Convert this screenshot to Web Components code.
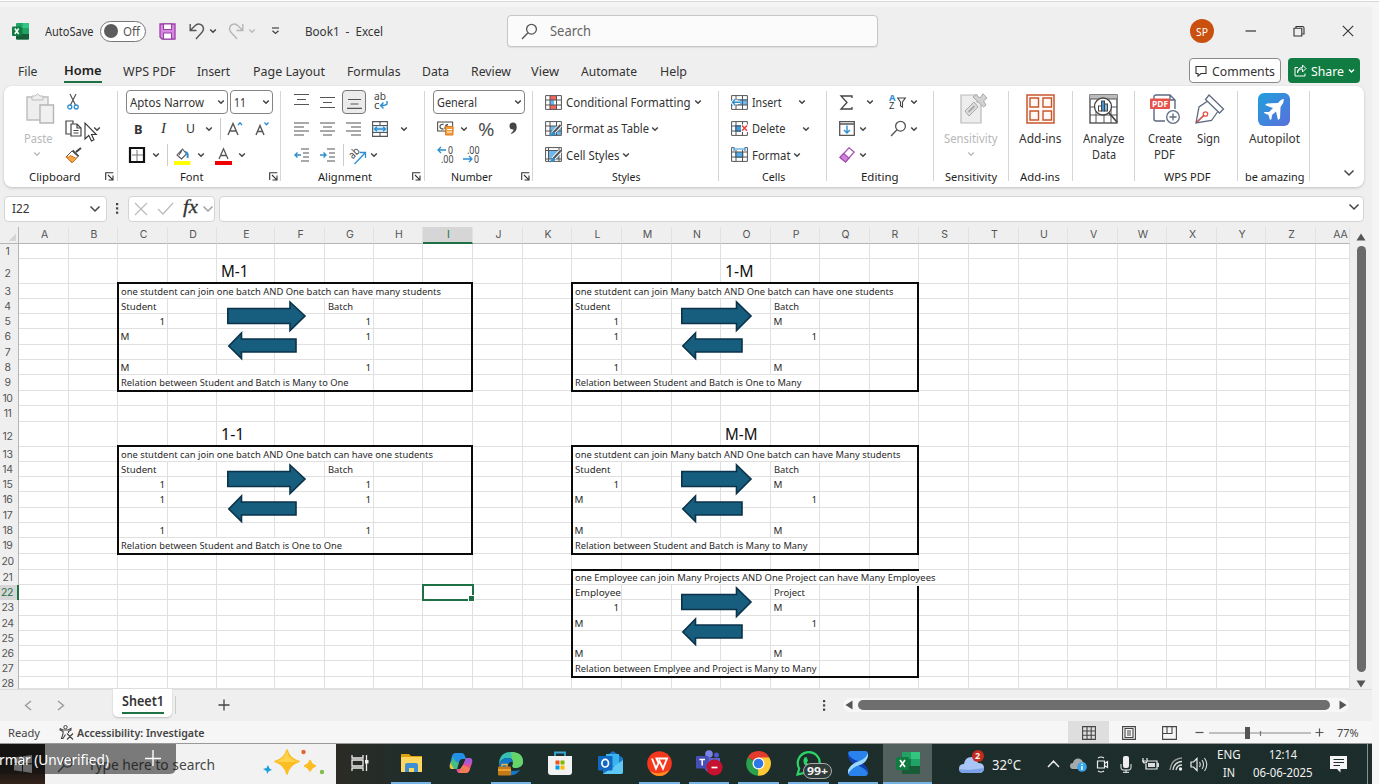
<!DOCTYPE html>
<html lang="en">
<head>
<meta charset="utf-8">
<title>Book1 - Excel</title>
<style>
html,body{margin:0;height:100%;overflow:hidden}
body{font-family:"Noto Sans","Open Sans",sans-serif;font-size:12.500px;color:#333;background:#f5f5f5}
</style>
</head>
<body>
<excel-app></excel-app>
<script>
const S = (d, c = '#555', w = 1.2, f = 'none') => `<path d="${d}" stroke="${c}" stroke-width="${w}" fill="${f}"/>`;
const B = '#2d8fd0';
const gridBase = (extra) => `<rect x=".6" y=".6" width="15.6" height="13.8" fill="#fff"/>` + extra + S('M.6.6H16.4V14.4H.6ZM.6 5H16.4M.6 10H16.4M5 .6V14.4M11.5 .6V14.4', '#555', 1);
const ICONS = {
  chev: [8, 6, S('M1.2 1.5L4 4.3L6.8 1.5', '#444', 1.5)],
  chevL: [8, 6, S('M1.2 1.5L4 4.3L6.8 1.5', '#bbb', 1.4)],
  bigchev: [12, 8, S('M1.5 1.5L6 6L10.5 1.5', '#444', 1.5)],
  launch: [9, 9, S('M.7 8V.7H8.3M3 3L7.6 7.6M8 3.5V8H3.5', '#333', 1.1)],
  excel: [17, 17, `<rect x="4" width="13" height="16.5" rx="1" fill="#21a366"/><path d="M10.500 0H16a1 1 0 0 1 1 1V5H10.500Z" fill="#33c481"/><path d="M4 5H10.500V11H4Z" fill="#107c41"/><path d="M4 11H17V15.500a1 1 0 0 1-1 1H5a1 1 0 0 1-1-1Z" fill="#185c37"/><rect y="3.500" width="9.500" height="9.500" rx="1" fill="#107c41"/>` + S('M2.800 5.500L6.700 11M6.700 5.500L2.800 11', '#fff', 1.5)],
  save: [17, 17, `<path d="M1 1H16V16H3L1 14Z" fill="#d78be0" stroke="#9a3fa8" stroke-width="1.300"/><path d="M4.500 1H12.500V6.500H4.500ZM4.500 16V10H12.500V16Z" fill="#fff" stroke="#9a3fa8" stroke-width="1.100"/>`],
  undo: [16, 17, S('M1.200 1V7.500H7.500M1.500 7.300L6 2.800C9-.5 14.500 1.200 14.500 6C14.500 9 12 10 7 16', '#555', 1.4)],
  redo: [16, 17, S('M14.800 1V7.500H8.500M14.500 7.300L10 2.800C7-.5 1.500 1.200 1.500 6C1.500 9 4 10 9 16', '#b5b5b5', 1.4)],
  custom: [9, 8, S('M1 1H8', '#444', 1.2) + S('M1.500 3.800L4.500 6.500L7.500 3.800', '#444', 1.3)],
  search: [17, 17, `<circle cx="10.500" cy="6.200" r="4.900" fill="none" stroke="#555" stroke-width="1.300"/>` + S('M7 9.800L1 16', '#555', 1.4)],
  min: [12, 12, S('M.5 6H11', '#333')], restore: [12, 12, S('M3 3V1.500H9.500a1.500 1.500 0 0 1 1.500 1.500V9H9.500M1 3.300H8.800V11H1Z', '#333', 1.1)],
  close: [12, 12, S('M.8 .8L11.200 11.200M11.200 .8L.8 11.200', '#333', 1.1)],
  comment: [12, 12, S('M1 1.500H11V8.500H6L3 11V8.500H1Z', '#333', 1.1)],
  share: [13, 13, S('M4 3.500H1V12H11V9.500M3.500 9C4 6 6 5 8.500 5V8L12 4.500L8.500 1V3.500C5 3.500 3.300 6 3.500 9Z', '#fff', 1)],
  paste: [29, 31, `<path d="M1 4H22V27H1Z" fill="#eee" stroke="#bdbdbd" stroke-width="1.400"/><path d="M6 7V3H9L11.500 .8L14 3H17V7Z" fill="#eee" stroke="#bdbdbd"/><path d="M14 12H27.500V30H14Z" fill="#f0f0f0" stroke="#b5b5b5" stroke-width="1.400"/>`],
  cut: [12, 16, S('M3 0L8.500 11M9 0L3.500 11') + `<circle cx="2.800" cy="13" r="2" fill="none" stroke="${B}" stroke-width="1.300"/><circle cx="9.200" cy="13" r="2" fill="none" stroke="${B}" stroke-width="1.300"/>`],
  copy: [17, 17, S('M6 14H1V1H8V4M6 4H12L16 8V16H6ZM12 4V8H16M8.500 10.500H13.500M8.500 13H13.500', '#444', 1.2)],
  brush: [17, 16, S('M16 1L11 5M7.500 3.500L13.500 9.500', '#444', 2) + `<path d="M7 4L13 9.500L7 15.500L1 10Z" fill="#fff" stroke="#555"/><path d="M1 9.500Q4 11 5.500 8.500L11.500 11.500L7.500 15.500Q4 14 1 9.500Z" fill="#f2a64a" stroke="#d9781a"/>`],
  border: [16, 16, S('M1 1H15V15H1Z', '#111', 2.2) + S('M8 3V14M3 8H14', '#777', 1)],
  bucket: [17, 18, `<rect y="13" width="16.500" height="4" fill="#ffff00"/>` + S('M3 7L8.500 1L12.500 6L7.500 11ZM5 7L8 2.500', '#555', 1.1) + S('M11 4C14 4 14 7 13.500 10', B, 2)],
  fcolor: [17, 18, `<rect y="13" width="17" height="4" fill="#f00000"/>` + S('M4 11L8.500 .8L13 11M5.500 7.500H11.500', '#555', 1.3)],
  aup: [16, 15, S('M1 14L6 2.500L11 14M2.800 10H9.200', '#555', 1.4) + S('M11 4L13 1.800L15 4', B, 1.3)],
  adn: [14, 15, S('M1 14L5 4.500L9 14M2.500 10.500H7.500', '#555', 1.4) + S('M9.500 1.500L11.500 3.700L13.500 1.500', B, 1.3)],
  top: [15, 14, S('M0 1.500H15M3 6.500H12M0 11.500H15')],
  mid: [15, 14, S('M0 2.500H15M3 7.500H12M0 12.500H15')],
  bot: [15, 14, S('M1 4.500H14M3.500 9H11.500M0 13.300H15')],
  left: [15, 14, S('M0 1H15M0 5H10M0 9H15M0 13H10')], center: [15, 14, S('M0 1H15M3 5H12M0 9H15M3 13H12')], right: [15, 14, S('M0 1H15M5 5H15M0 9H15M5 13H15')],
  wrap: [16, 17, S('M14 9V12Q13 13.500 8 13.500M10.500 10.500L7.500 13.500L10.500 16.500', B, 1.4)],
  merge: [16, 16, `<rect x="1" y="4.500" width="14" height="7" fill="#cfe6f7"/>` + S('M.6.6H15.400V15.400H.6ZM.6 4.500H15.400M.6 11.500H15.400M8 .6V4.500M8 11.500V15', '#555', 1.1) + S('M2.500 8H13.500M5 5.800L2.500 8L5 10.200M11 5.800L13.500 8L11 10.200', B, 1.4)],
  outd: [15, 14, S('M7 1H15M9 5H15M9 9H15M7 13H15') + S('M7 7H1M3.500 4.500L1 7L3.500 9.500', B, 1.4)],
  ind: [15, 14, S('M7 1H15M9 5H15M9 9H15M7 13H15') + S('M0 7H6M3.500 4.500L6 7L3.500 9.500', B, 1.4)],
  orient: [18, 17, S('M5.500 16L16 5M11 4.500H16.500V10', B, 1.3)],
  money: [17, 15, `<rect x=".6" y="1" width="15" height="9" fill="#fff" stroke="#555" stroke-width="1.100"/>` + S('M6.500 3.500Q3 3 3 5.500T6.500 8M11 3.500Q8 4 8 8', '#555', 1.3) + `<path d="M8.500 5.500H16V14H8.500Z" fill="#f49a3c" stroke="#e07a1a"/>` + S('M10 8.500H15M10 11H15', '#fff', 1)],
  comma: [9, 13, `<circle cx="4" cy="4" r="3.500" fill="#444"/><path d="M4 6.500L7.500 4Q8.500 9.500 2.500 12L2 11Q5 9 4.500 6.500Z" fill="#444"/>`],
  cond: [17, 15, gridBase('<rect x="5" y="1" width="6.500" height="4" fill="#f4655c"/><rect x="5" y="5" width="4" height="5" fill="#69b5ef"/><rect x="5" y="10" width="6.500" height="4.500" fill="#f4655c"/>')],
  ftable: [17, 16, gridBase('<rect x="5" y="5" width="11" height="9" fill="#6cb8ee"/>') + S('M15.500 4L8 12', '#fff', 4) + S('M15.500 4L8 12', '#555', 2) + S('M8 11L5 15L10 13Z', B, 1, B)],
  cstyle: [17, 16, `<rect x=".6" y=".6" width="15.600" height="13.800" fill="#fff"/><rect x="3" y="3" width="11" height="9" fill="#6cb8ee"/>` + S('M.6.6H16.400V14.400H.6ZM.6 3.500H16.400M.6 12H16.400M3.500 .6V14.400M14 .6V14.400', '#555', 1) + S('M15.500 4L8 12', '#fff', 4) + S('M15.500 4L8 12', '#555', 2) + S('M8 11L5 15L10 13Z', B, 1, B)],
  cins: [17, 15, gridBase('<rect x="7" y="4" width="9" height="6" fill="#6cb8ee"/>') + S('M9 7.200H1.500M4.500 4L1.500 7.200L4.500 10.500', '#fff', 3.5) + S('M9 7.200H1.500M4.500 4L1.500 7.200L4.500 10.500', B, 1.400)],
  cdel: [17, 15, gridBase('<rect x="4" y="4" width="7" height="7" fill="#3f9ee0"/>') + `<rect x="10" y="3.500" width="7" height="7.500" fill="#fff"/>` + S('M11 4.500L16 9.800M16 4.500L11 9.800', '#e5433b', 1.500)],
  cfmt: [17, 16, gridBase('<rect x="4" y="5" width="8.500" height="6" fill="#55acec"/>') + `<rect x="3" y="0" width="11" height="3" fill="#fff"/>` + S('M3 2H14M3 0V4M14 0V4', B, 1.1)],
  sigma: [13, 15, S('M12 3V1H1L7 7.500L1 14H12V12', '#444', 1.300)],
  filter: [9, 11, S('M.7 1H8.300L5.500 5V10L3.500 9V5Z', '#444', 1.100)],
  fill: [16, 15, S('M.7.7H15.300V14.300H.7ZM.7 3H15.300', '#555', 1.300) + S('M8 4.500V12M5 9L8 12L11 9', B, 1.400)],
  eraser: [16, 16, `<path d="M10 .8L15.200 5L6.500 15L1 10.500Z" fill="#fff" stroke="#a94bb5" stroke-width="1.200"/><path d="M4.500 6.500L10 11L6.500 15L1 10.500Z" fill="#cf86d8" stroke="#a94bb5" stroke-width="1.200"/>`],
  sens: [28, 31, `<path d="M1 2H17V9H21V30H1Z" fill="#ededed" stroke="#b9b9b9" stroke-width="1.200"/><path d="M5 18L14 9L18 14L9 23Z" fill="#ddd" stroke="#aaa"/>` + S('M8.500 19L14.500 13', '#aaa', 2) + `<path d="M13 4L16 1.500L20 5L23 .8L27 5L23.500 8L26 12L23.500 14Z" fill="#d2d2d2" stroke="#aaa"/>`],
  addins: [29, 30, `<rect x="1" y="1" width="27" height="28" fill="#fff8f4" stroke="#c7572d" stroke-width="1.500"/>` + S('M4 4H12.500V13H4ZM17 4H25.500V13H17ZM4 17H12.500V26H4ZM17 17H25.500V26H17Z', '#c7572d', 1.400)],
  analyze: [29, 31, `<rect x="1" y="1" width="27" height="28" fill="#fff" stroke="#444" stroke-width="1.300"/><rect x="1" y="1" width="27" height="4" fill="#bbb"/>` + S('M1 5H28M1 13H28M1 21H28M7 13V29M15 21V29M22 13V29', '#555', 1) + `<circle cx="14" cy="12.500" r="8.500" fill="#fff" stroke="#444" stroke-width="1.300"/>` + S('M20 19L28 28', '#444', 1.800) + `<rect x="9.500" y="12" width="3" height="5" fill="#fff" stroke="#444"/><rect x="12.500" y="7" width="3" height="10" fill="#4a8fd0" stroke="#444"/><rect x="15.500" y="10" width="3" height="7" fill="#7bbcec" stroke="#444"/>`],
  pdf: [30, 31, S('M4 5V3Q4 1 6 1H20L25 6V15M4 14V25Q4 27 6 27H15M20 1V6H25', '#5d6a80', 1.400) + `<rect y="4.500" width="20" height="10.500" rx="1" fill="#e5534b"/><circle cx="23" cy="23" r="6.300" fill="#fff" stroke="#5d6a80" stroke-width="1.300"/>` + S('M23 19.500V26.500M19.500 23H26.500', '#5d6a80', 1.300)],
  sign: [30, 31, S('M14 1L28.500 15L24.500 19L10.500 5.500ZM12 7.500L4 13L1 29L16.500 26.500L22.500 18M1.500 28.500L9 21', '#5d6a80', 1.300) + `<circle cx="10.500" cy="20" r="2.200" fill="none" stroke="#e5534b" stroke-width="1.300"/>` + S('M2 28L9 21.500', '#e5534b')],
  pilot: [32, 33, `<defs><linearGradient id="g" x1="0" y1="0" x2="1" y2="1"><stop stop-color="#1fa0dc"/><stop offset="1" stop-color="#5b6fdc"/></linearGradient></defs><rect width="32" height="33" rx="6" fill="url(#g)"/><path d="M26 6Q23 6 20 10L9 10.500L7 12L15 15L11 19L6.500 19L6 20L10.500 22L12 27L13.500 26L14 22L18 18.500L20 27L22 25.500L22.500 14Q26 10 26 6Z" fill="#fff"/>`],
  x: [14, 14, S('M1 1L13 13M13 1L1 13', '#bbb', 1.200)], check: [17, 13, S('M1 7L6 12L16 1', '#bbb', 1.300)],
  dots: [3, 13, `<g fill="#444"><rect y="1" width="2.200" height="2.200"/><rect y="5.300" width="2.200" height="2.200"/><rect y="9.600" width="2.200" height="2.200"/></g>`],
  prev: [8, 11, S('M7 1L1.500 5.500L7 10', '#999', 1.400)], next: [8, 11, S('M1 1L6.500 5.500L1 10', '#999', 1.400)], plus: [12, 12, S('M6 .5V11.500M.5 6H11.500', '#444', 1.300)],
  tl: [8, 10, `<path d="M7.500 .5V9.500L.5 5Z" fill="#555"/>`], tr: [8, 10, `<path d="M.5 .5V9.500L7.500 5Z" fill="#555"/>`],
  tu: [10, 8, `<path d="M.5 7.500H9.500L5 .5Z" fill="#555"/>`], td: [10, 8, `<path d="M.5 .5H9.500L5 7.500Z" fill="#555"/>`],
  access: [15, 15, `<circle cx="6.500" cy="2.200" r="1.700" fill="none" stroke="#444"/>` + S('M1 3.500L4 5H9L12 3.500V5L9.500 6.500V8M4 6V9L2.500 13.500H4L6.500 9.500M1 3.500V5L4 6.500M8 8.500L14 14.500M14 8.500L8 14.500', '#444', 1.100)],
  v1: [14, 14, S('M.6.6H13.400V13.400H.6ZM.6 5H13.400M.6 9.200H13.400M5 .6V13.400M9.200 .6V13.400', '#444', 1.100)],
  v2: [14, 14, S('M.6.6H13.400V13.400H.6ZM3 2.500H11V11.500H3ZM5 5H9M5 7H9M5 9H9', '#444', 1.100)],
  v3: [15, 14, S('M.6.6H14.400V13.400H.6ZM5 .6V7M10 .6V7M.6 7.500H10.500', '#444', 1.100)],
  zoomer: [102, 12, S('M0 6H102', '#888', 1.100) + S('M51.500 4V9', '#777') + `<rect x="36" width="5" height="12" fill="#555"/>`],
  minus: [9, 9, S('M.5 4.500H8.500', '#555', 1.200)], plus2: [9, 9, S('M.5 4.500H8.500M4.500 .5V8.500', '#555', 1.200)],
  stars: [62, 28, `<path d="M24 1Q26.500 10 36 12.500Q26.500 15 24 25Q21.500 15 12 12.500Q21.500 10 24 1Z" fill="#fbbd21" stroke="#fbbd21" stroke-width="1.500" stroke-linejoin="round"/><path d="M24 2Q25 10 35 12.500Q24 14 13 12.500Q21.500 10 24 2Z" fill="#ffd44a"/><path d="M47 11Q48.500 15.500 53 17Q48.500 18.500 47 22.500Q45.500 18.500 41 17Q45.500 15.500 47 11Z" fill="#fbbd21" stroke="#fbbd21" stroke-linejoin="round"/><path d="M5 16L6.500 19.500L9 21L6 22L4 25L3.500 22L0 20L3.500 19Z" fill="#1c9fe0"/><circle cx="40.500" cy="3" r="2.200" fill="#e2662f"/><circle cx="59" cy="23" r="2.200" fill="#84bd4b"/>`],
  win: [18, 18, `<path d="M0 2.500L8 1.300V8.300H0ZM9 1.200L18 0V8.300H9ZM0 9.300H8V16.500L0 15.300ZM9 9.300H18V18L9 16.600Z" fill="#d0d0d0"/>`],
  task: [18, 16, S('M1 0V3H12V0M1 16V13H12V16M1 5H12V11H1ZM15.500 0V16', '#eee', 1.300) + `<rect x="14" y="5" width="3.500" height="3.500" fill="#eee"/>`],
  folder: [23, 20, `<path d="M1 1H9L11 3H22V17H1Z" fill="#e0a20c"/><path d="M1 4H22V19H1Z" fill="#ffd75e"/><path d="M5 19V12Q5 10 7 10H16Q18 10 18 12V19H14V15H9V19Z" fill="#3c8fd2"/>`],
  copilot: [24, 22, `<path d="M6 1H13Q15 1 16 4L17 7H13Q11 7 10 10L8 17H3Q0 17 1 12L3 4Q4 1 6 1Z" fill="#2390e8"/><path d="M3 9L8 17H3Q0 17 1 12Z" fill="#f2c431"/><path d="M4 5Q7 12 10 10L8 17H5L2 12Z" fill="#46bd83"/><path d="M17 6H20Q24 6 23 11L21 17Q20 21 17 21H10Q8 21 7.500 17H11Q13 17 14 13Z" fill="#e34f9f"/><path d="M17 6H20Q24 6 23 11L15 12Z" fill="#a45bd9"/><path d="M11 17L14 13L21 16Q20 21 17 21H10Z" fill="#f57a58"/>`],
  edge: [26, 25, `<path d="M1 14Q1 1 13 1Q25 1 25 11Q25 16 18 17Q13 17 15 13Q16 7 9 7Q3 7 1 14Z" fill="#37c1b0"/><path d="M13 1Q25 1 25 11Q25 16 18 17Q13 17 15 13Z" fill="#67d469"/><path d="M1 14Q3 7 9 7Q14 7 15 11Q10 10 10 16Q11 22 22 19Q18 25 12 24Q2 23 1 14Z" fill="#1477c9"/><rect y="15.500" width="13" height="9" rx="1" fill="#c47a18"/><path d="M4 15.500V13.500H9V15.500M0 19H13" fill="none" stroke="#f4b13d" stroke-width="1.300"/>`],
  store: [24, 24, S('M7 6V1.500H17V6', '#39a8db', 1.800) + `<path d="M0 5H24V21Q24 24 21 24H3Q0 24 0 21Z" fill="#f2f2f2"/><path d="M7.500 9.500H11.500V13.500H7.500Z" fill="#f15022"/><path d="M12.500 9.500H16.500V13.500H12.500Z" fill="#7ebb00"/><path d="M7.500 14.500H11.500V18.500H7.500Z" fill="#009fee"/><path d="M12.500 14.500H16.500V18.500H12.500Z" fill="#ffb800"/>`],
  outlook: [25, 24, `<path d="M5 7L15 0L25 7V21Q25 23 23 23H5Z" fill="#1b74c4"/><path d="M8 3H21V15H8Z" fill="#38b5ee"/><path d="M5 23L25 9V21Q25 23 23 23Z" fill="#5ec9f5"/><rect y="5" width="14.500" height="14.500" rx="1" fill="#1168c0"/><ellipse cx="7.200" cy="12.200" rx="3.300" ry="3.800" fill="none" stroke="#fff" stroke-width="1.700"/>`],
  wps: [25, 25, `<circle cx="12.500" cy="12.500" r="12.300" fill="#f5381d"/><path d="M3 20Q12 25 22 19Q19 25 12.500 25Q6 25 3 20Z" fill="#ff8a1e"/>` + S('M5 7.500L9 17.500L12.500 10L16 17.500L20 7.500H9.500L12 13', '#fff', 1.900)],
  teams: [27, 26, `<circle cx="13" cy="4" r="3.800" fill="#7b83eb"/><circle cx="20.500" cy="5" r="2.500" fill="#5059c9"/><path d="M8 8H24V16Q22 23 15 23Q9 22 8 16Z" fill="#5c63cf"/><rect y="6" width="12.500" height="12.500" rx="1" fill="#464eb8"/>` + S('M3.500 9.500H9M6.200 9.500V15.500', '#fff', 1.500) + `<circle cx="18.500" cy="17.500" r="8" fill="#c4122f"/>` + S('M15.500 17.500H21.500', '#fff', 1.700)],
  chrome: [25, 25, `<path d="M12.500 12.500L1.700 6.500A12.300 12.300 0 0 1 23.300 6.500Z" fill="#e33b2e"/><path d="M12.500 12.500L1.700 6.500A12.300 12.300 0 0 0 12 24.800L18 14Z" fill="#2aa14c"/><path d="M12.500 12.500V6.500H23.300A12.300 12.300 0 0 1 12 24.800Z" fill="#fcc934"/><circle cx="12.500" cy="12.500" r="6" fill="#fff"/><circle cx="12.500" cy="12.500" r="4.800" fill="#2f76e8"/>`],
  wa: [26, 25, `<path d="M1.500 23.500L3.200 17.500A11 11 0 1 1 8 22Z" fill="none" stroke="#2bd467" stroke-width="2.200"/><path d="M8.500 6.500L10.500 6L12 9.500L10.800 11.500Q12 14 15 15L16.500 13.500L19.500 15Q18 19 14 18Q7 15 7.500 9Z" fill="#2bd467"/>`],
  blue: [22, 25, `<path d="M1 3Q1 0 4 0H18Q21 0 21 3Q21 8 15 12.500Q21 17 21 21Q21 25 18 25H4Q1 25 1 21Q1 17 7 12.500Q1 8 1 3Z" fill="#2a83ec"/><path d="M1 2Q3 8 11 10Q17 12 20 17Q21 19 21 22Q17 16 9 14Q2 11 1 5Z" fill="#123fae"/><path d="M21 2Q19 8 11 10.500Q4 13 1 19V23Q5 16 13 14Q20 11 21 5Z" fill="#9bd6ff"/>`],
  bigexcel: [24, 22, `<path d="M6 0H23Q24 0 24 1V21Q24 22 23 22H7Q6 22 6 21Z" fill="#21a366"/><path d="M15 0H24V7H15Z" fill="#33c481"/><path d="M6 14H24V21Q24 22 23 22H7Q6 22 6 21Z" fill="#185c37"/><path d="M6 7H15V14H6Z" fill="#107c41"/><rect y="5" width="13" height="13" rx="1" fill="#107c41"/>` + S('M4 8L9 15M9 8L4 15', '#fff', 1.700)],
  weather: [26, 20, `<path d="M5 19Q0 19 0 14.500Q0 10 5 10Q6 3 12.500 3Q18 3 19 9Q25 9 25 14Q25 19 20 19Z" fill="#a9c5f5"/><path d="M5 19Q0 19 0 15Q8 17 25 14Q25 19 20 19Z" fill="#7ba2e8"/>`],
  up: [13, 8, S('M1 7L6.500 1.200L12 7', '#e8e8e8', 1.500)],
  onedrive: [17, 15, `<path d="M3 12Q0 12 0 9Q0 6 3 6Q4 1 9 1.500Q12 2 13 5Q16 6 16 9Q16 12 13 12Z" fill="#a6aaa9"/><circle cx="12" cy="10" r="4.800" fill="#38a3e8"/>` + S('M12 9V13M12 6.800V8', '#fff', 1.400)],
  cam: [13, 17, S('M1.500 5H8.500V12H1.500ZM8.500 7.500L11.500 5.500V11.500L8.500 9.500M2 2Q5 0 8 2M2 15Q5 17 8 15', '#eee', 1.200)],
  mic: [12, 17, `<rect x="3" width="6" height="12" rx="2" fill="#eee"/>` + S('M1 8V12Q1 14 3 14H9Q11 14 11 12V8M6 14V17M3 16.300H9', '#eee', 1)],
  batt: [17, 14, S('M5 4H15V12H4V7M16.300 6V10M0 4H4M1 1V4Q1 6 3 6T5 4V1', '#eee', 1.200) + `<rect x="6" y="6" width="7" height="4" fill="#ddd"/>`],
  wifi: [14, 14, S('M1 13Q2 2 13 1', '#999', 1.300) + S('M4 13Q5 5 13 4.500M7 13Q8 8 13 8', '#ddd', 1.300) + `<circle cx="11.500" cy="12" r="1.700" fill="#eee"/>`],
  vol: [18, 15, S('M1 5H3.500L7 1.500V13.500L3.500 10H1Z', '#eee', 1.200) + S('M9.500 5Q11 7.500 9.500 10M12 3Q15 7.500 12 12M14.500 1Q19 7.500 14.500 14', '#ddd', 1.100)],
  notif: [18, 18, `<path d="M0 1H17V14H10.500V17.500L7 14H0Z" fill="#f5f5f5"/>` + S('M3.500 4.500H14M3.500 7.500H14M3.500 10.500H10', '#1d2d2b', 1.200)],
  cursor: [13, 20, `<path d="M1 1V17L4.800 13.500L7.500 19L10 17.800L7.500 12.500H12.300Z" fill="#fff" stroke="#333" stroke-width="1.100"/>`]
};

/* Single icon drawn at its natural pixel size. */
class UiIcon extends HTMLElement {
  constructor() { super(); this.attachShadow({ mode: 'open' }); }
  connectedCallback() {
    const [w, h, body] = ICONS[this.getAttribute('name')];
    this.shadowRoot.innerHTML = `<style>:host{display:inline-block;flex:none;width:${w}px;height:${h}px}svg{display:block;overflow:visible}</style><svg width="${w}" height="${h}" viewBox="0 0 ${w} ${h}">${body}</svg>`;
  }
}

/* Text condensed or stretched so that it fills the width given in its w attribute. */
const fitted = new Set();
class FitText extends HTMLElement {
  constructor() {
    super();
    this.attachShadow({ mode: 'open' }).innerHTML = `<style>:host{display:inline-block;flex:none;white-space:pre}span{display:inline-block;transform-origin:0 50%}</style><span><slot></slot></span>`;
  }
  connectedCallback() { this.style.width = this.getAttribute('w') + 'px'; fitted.add(this); }
  fit() {
    const s = this.shadowRoot.querySelector('span'), nat = s.offsetWidth && parseFloat(getComputedStyle(s).width);
    if (nat) s.style.transform = `scaleX(${(this.getAttribute('w') / nat).toFixed(4)})`;
  }
}

/* line(): a flex row; each entry is [left, width, markup], spaced by margins. */
const line = (start, items, style = '') => {
  let at = start;
  return `<div class="line" style="${style}">` + items.map(([x, w, m]) => {
    const gap = x - at; at = x + w;
    return `<span style="margin-left:${gap}px;width:${w}px">${m}</span>`;
  }).join('') + '</div>';
};
const I = (x, name, dy = 0) => [x, ICONS[name][0], `<ui-icon name="${name}"${dy ? ` style="margin-top:${dy}px"` : ''}></ui-icon>`];
const T = (x, w, t, s = '') => [x, w, `<fit-text w="${w}" style="${s}">${t}</fit-text>`];
const H = (x, w, m) => [x, w, m];
const LINE = `*{box-sizing:border-box}.line{display:flex;align-items:center;flex:none}.line>span{flex:none;display:flex;align-items:center}`;

class TitleBar extends HTMLElement {
  constructor() {
    super();
    this.attachShadow({ mode: 'open' }).innerHTML = `<style>:host{display:block}${LINE}
      .tog{width:46px;height:21px;border:1.300px solid #777;border-radius:11px;background:#fff;display:flex;align-items:center;padding-left:3px;color:#555}
      .tog i{width:14px;height:14px;border-radius:50%;background:#5c5c5c;margin-right:5px}
      .search{width:371px;height:32px;border:1px solid #c6c6c6;border-radius:4px;background:#fbfbfb;display:flex;align-items:center;padding-left:13px;gap:12px;box-shadow:0 1px 1px #ddd;color:#666;font-size:13.500px}
      .av{width:24px;height:24px;border-radius:50%;background:#ca5010;color:#fff;display:flex;align-items:center;justify-content:center}
      </style>` + line(0, [I(12, 'excel'), T(44.5, 48.5, 'AutoSave'),
      H(100, 46, '<div class="tog"><i></i><fit-text w="17">Off</fit-text></div>'),
      I(159, 'save'), I(189, 'undo'), I(209, 'chev'), I(228, 'redo'), I(248, 'chevL'), I(271, 'custom'),
      T(305, 78, 'Book1  -  Excel'),
      H(507, 371, '<div class="search"><ui-icon name="search"></ui-icon><fit-text w="41">Search</fit-text></div>'),
      H(1190, 24, '<div class="av"><fit-text w="12" style="font-size:11px">SP</fit-text></div>'),
      I(1245, 'min'), I(1293, 'restore'), I(1342, 'close')], 'height:48px');
  }
}

class MenuTabs extends HTMLElement {
  constructor() {
    super();
    const tabs = [['File', 18, 19.5], ['Home', 64, 37.5], ['WPS PDF', 122.5, 52.5], ['Insert', 197, 33], ['Page Layout', 253, 72], ['Formulas', 347, 53.5], ['Data', 422, 27], ['Review', 471, 40], ['View', 531, 28], ['Automate', 581, 56], ['Help', 660, 27]];
    this.attachShadow({ mode: 'open' }).innerHTML = `<style>:host{display:block;font-size:13px}${LINE}
      .home{font-weight:600;color:#222;border-bottom:2px solid #1e7145;height:23px;display:flex;align-items:center;margin-top:1px}
      .btn{height:25px;border-radius:4px;display:flex;align-items:center;justify-content:center;gap:5px}
      .c{width:92px;border:1px solid #8a8a8a;background:#fff}.s{width:72px;background:#107c41;color:#fff;gap:4px}</style>` +
      line(0, [...tabs.map(([t, x, w]) => t === 'Home' ? H(x, w, `<div class="home"><fit-text w="${w}">${t}</fit-text></div>`) : T(x, w, t)),
      H(1188.5, 92, '<div class="btn c"><ui-icon name="comment"></ui-icon><fit-text w="63">Comments</fit-text></div>'),
      H(1288, 72, '<div class="btn s"><ui-icon name="share"></ui-icon><fit-text w="33">Share</fit-text><svg width="7" height="6"><path d="M1 1.500L3.500 4L6 1.500" stroke="#fff" stroke-width="1.300" fill="none"/></svg></div>')], 'height:31px');
  }
}

class RibbonGroup extends HTMLElement {
  constructor() {
    super();
    this.attachShadow({ mode: 'open' }).innerHTML = `<style>:host{display:flex;flex:none;box-sizing:border-box;padding:3px 0 1px;position:relative}:host::after{content:"";width:1px;background:#d6d6d6;margin:2px 0 5px}div{flex:1;width:0}</style><div><slot></slot></div>`;
  }
  connectedCallback() { this.style.width = this.getAttribute('w') + 'px'; }
}

class RibbonBar extends HTMLElement {
  constructor() {
    super();
    const row = 'height:26.500px';
    const R = (x0, ...its) => line(x0, its, row);
    const L = (x0, ...its) => line(x0, its, 'height:16px;font-size:11.500px;color:#222');
    const combo = (x, w, t, tw) => H(x, w, `<div class="combo"><fit-text w="${tw}">${t}</fit-text><ui-icon name="chev"></ui-icon></div>`);
    const sep = x => H(x, 1, '<i class="sep"></i>');
    const big = (x0, icons, rows) => line(x0, icons, 'height:42px') + rows.map(r => line(x0, r, 'height:15.500px')).join('') + '<div style="height:6.500px"></div>';
    const groups = [
      [4, 118, `<div style="display:flex"><div style="width:58px">` + big(4, [I(26, 'paste', -3)], [[T(23.5, 28.5, 'Paste', 'color:#b8b8b8')], [I(33, 'chevL')]]) + `</div><div>` +
        R(62, I(67, 'cut')) + R(62, I(65, 'copy'), I(93, 'chev')) + R(62, I(65, 'brush')) + `</div></div>` + L(4, T(28.5, 51.5, 'Clipboard'), I(105, 'launch'))],
      [118, 281, R(118, combo(125.5, 102, 'Aptos Narrow', 74), combo(230, 43, '11', 12)) +
        R(118, T(133.5, 8.5, '<b>B</b>', 'font-size:13px'), T(161, 5, 'I', 'font:italic 15px Liberation Serif'), T(185.5, 9, 'U', 'text-decoration:underline'), I(205, 'chev'), sep(220), I(227, 'aup', -1), I(255, 'adn', -1)) +
        R(118, I(129, 'border'), I(152, 'chev'), sep(167), I(174, 'bucket', 3), I(197, 'chev'), I(215, 'fcolor', 3), I(238, 'chev')) + L(118, T(179.5, 23.5, 'Font'), I(269, 'launch'))],
      [281, 425, R(281, I(294, 'top', -4), I(320, 'mid', -1), H(342, 24, '<div class="sel"><ui-icon name="bot"></ui-icon></div>'), H(374, 16, '<div class="wrap"><fit-text w="12">ab</fit-text><fit-text w="5.500">c</fit-text><ui-icon name="wrap"></ui-icon></div>')) +
        R(281, I(294, 'left'), I(320, 'center'), I(346, 'right'), I(372, 'merge'), I(400, 'chev')) +
        R(281, I(294, 'outd'), I(320, 'ind'), sep(343), H(349, 18, '<div class="ori"><fit-text w="11">ab</fit-text><ui-icon name="orient"></ui-icon></div>'), I(370, 'chev')) + L(281, T(317.5, 54, 'Alignment'), I(412, 'launch'))],
      [425, 533, R(425, combo(433, 92, 'General', 40)) + R(425, I(437, 'money'), I(460, 'chev'), T(478, 16.5, '%', 'font-size:18px;color:#555'), I(509, 'comma')) +
        R(425, H(437, 16, '<div class="dec"><fit-text w="5">0</fit-text><fit-text w="12.500">.00</fit-text><svg width="9" height="8"><path d="M9 4H1M4 1L1 4L4 7" fill="none" stroke="#2d8fd0" stroke-width="1.300"/></svg></div>'), H(463, 17, '<div class="dec two"><fit-text w="12.500">.00</fit-text><fit-text w="5">0</fit-text><svg width="10" height="8"><path d="M0 4H9M6 1L9 4L6 7" fill="none" stroke="#2d8fd0" stroke-width="1.300"/></svg></div>')) + L(425, T(450.5, 41.5, 'Number'), I(521, 'launch'))],
      [533, 719, R(533, I(545, 'cond'), T(566, 124.5, 'Conditional Formatting'), I(694, 'chev')) + R(533, I(545, 'ftable'), T(566, 83, 'Format as Table'), I(651, 'chev')) + R(533, I(545, 'cstyle'), T(566, 53.5, 'Cell Styles'), I(622, 'chev')) + L(533, T(611.5, 28.5, 'Styles'))],
      [719, 827, R(719, I(731, 'cins'), T(752, 29.5, 'Insert'), I(798, 'chev')) + R(719, I(731, 'cdel'), T(752, 33.5, 'Delete'), I(802, 'chev')) + R(719, I(731, 'cfmt'), T(752, 38.5, 'Format'), I(793, 'chev')) + L(719, T(761.5, 23.5, 'Cells'))],
      [827, 934, R(827, I(840, 'sigma'), I(866, 'chev'), H(889, 8, '<div class="az"><b>A</b><span>Z</span></div>'), I(897, 'filter'), I(910, 'chev')) + R(827, I(839, 'fill'), I(859, 'chev'), I(890, 'search'), I(910, 'chev')) + R(827, I(839, 'eraser'), I(859, 'chev')) + L(827, T(861, 37.5, 'Editing'))],
      [934, 1009, big(934, [I(960, 'sens', -3)], [[T(944, 53.5, 'Sensitivity', 'color:#b8b8b8')], [I(966.5, 'chevL')]]) + L(934, T(945, 52, 'Sensitivity'))],
      [1009, 1073, big(1009, [I(1026, 'addins', -2)], [[T(1019, 42.5, 'Add-ins')], []]) + L(1009, T(1020, 40, 'Add-ins'))],
      [1073, 1135, big(1073, [I(1089, 'analyze', -2)], [[T(1082.5, 41.5, 'Analyze')], [T(1092, 24, 'Data')]])],
      [1135, 1238, big(1135, [H(1150, 30, '<div class="pdf"><ui-icon name="pdf"></ui-icon><fit-text w="16">PDF</fit-text></div>'), I(1195, 'sign', -2)], [[T(1147.5, 34, 'Create'), T(1197, 23, 'Sign')], [T(1153.5, 21, 'PDF')]]) + L(1135, T(1163.5, 46.5, 'WPS PDF'))],
      [1238, 1310, big(1238, [I(1258, 'pilot', -2)], [[T(1248.5, 51, 'Autopilot')], []]) + L(1238, T(1244.5, 59.5, 'be amazing'))]
    ];
    this.attachShadow({ mode: 'open' }).innerHTML = `<style>:host{display:block;margin:0 8px 0 4px;height:101px;background:#fff;border-radius:8px;box-shadow:0 1px 3px #0003}${LINE}
      .bar{display:flex;height:101px}
      .combo{width:100%;height:24px;border:1px solid #858585;border-radius:4px;display:flex;align-items:center;justify-content:space-between;padding:0 2px 0 3px;background:#fff;color:#333}
      .sep{width:1px;height:22px;background:#ccc}
      .sel{width:24px;height:24px;border:1px solid #777;border-radius:4px;background:#ebebeb;display:flex;align-items:center;justify-content:center}
      .wrap{position:relative;width:16px;height:18px;font-size:11.500px;line-height:9px;color:#444;margin-top:-4px;display:flex;flex-direction:column}.wrap ui-icon{position:absolute;left:-1px;top:1px}
      .ori{position:relative;width:18px;height:17px;font-size:11px;line-height:11px;color:#444}.ori fit-text{transform:rotate(-45deg);position:absolute;left:-1px;top:0}.ori ui-icon{position:absolute;left:0;top:1px}
      .dec{position:relative;width:16px;height:18px;font:10.500px/9px "Noto Sans";color:#444;display:flex;flex-direction:column;align-items:flex-end}.dec svg{position:absolute;left:0;top:0}.two svg{top:9px}
      .az{font-size:9.500px;line-height:8.500px;display:flex;flex-direction:column;color:#333}.az b{color:#2d8fd0}
      .pdf{position:relative;margin-top:-2px;height:31px}.pdf fit-text{position:absolute;left:2px;top:4px;color:#fff;font:bold 8px/11px "Noto Sans"}
      .end{flex:1;display:flex;align-items:flex-end;justify-content:flex-end;padding:0 9px 10px}</style>
      <div class="bar">` + groups.map(([a, b, m]) => `<ribbon-group w="${b - a}">${m}</ribbon-group>`).join('') + `<div class="end"><ui-icon name="bigchev"></ui-icon></div></div>`;
  }
}

class FormulaBar extends HTMLElement {
  constructor() {
    super();
    this.attachShadow({ mode: 'open' }).innerHTML = `<style>:host{display:block}${LINE}
      .b{height:26px;border:1px solid #d4d4d4;border-radius:4px;background:#fff;width:100%;display:flex;align-items:center;flex:none}</style>` +
      line(0, [H(4, 103, '<div class="b" style="justify-content:space-between;padding:0 5px 0 7px"><fit-text w="17.500">I22</fit-text><ui-icon name="bigchev"></ui-icon></div>'), I(116, 'dots'),
      H(128, 87, '<div class="b" style="padding:0 1px 0 5px"><ui-icon name="x"></ui-icon><ui-icon name="check" style="margin:0 8px 0 9px"></ui-icon><fit-text w="15" style="font:italic 18px Liberation Serif;margin:-2px 3px 0 1px;-webkit-text-stroke:.3px #333">fx</fit-text><ui-icon name="bigchev" style="margin-left:1px;opacity:.5"></ui-icon></div>'),
      H(219, 1145, '<div class="b" style="justify-content:flex-end;padding-right:3px"><ui-icon name="bigchev" style="margin-top:-4px"></ui-icon></div>')], 'height:43px;margin-top:0');
  }
}

class SheetGrid extends HTMLElement {
  constructor() {
    super();
    const cx = [0, 19, 69, 118, 168, 217, 275, 325, 374, 423, 473, 523, 572, 622, 672, 721, 771, 820, 870, 919, 969, 1019, 1068, 1118, 1167, 1217, 1266, 1316, 1350];
    const ry = [227, 244, 259, 284, 299, 314, 329, 345, 360, 375, 391, 406, 422, 447, 462, 477, 492, 508, 523, 538, 554, 570, 585, 600, 616, 631, 646, 661, 677, 689];
    const cols = cx.slice(1).map((v, i) => v - cx[i] + 'px').join(' '), rows = ry.slice(1).map((v, i) => v - ry[i] + 'px').join(' ');
    const name = i => i < 26 ? String.fromCharCode(65 + i) : 'AA';
    let h = '<div class="corner" style="grid-area:1/1"></div>';
    for (let c = 0; c < 27; c++) h += `<div class="ch${c === 8 ? ' on' : ''}${c === 26 ? ' last' : ''}" style="grid-area:1/${c + 2}">${name(c)}</div>`;
    for (let r = 1; r < 29; r++) {
      h += `<div class="rh${r === 22 ? ' ron' : ''}${r === 2 || r === 12 ? ' tall' : ''}${r === 28 ? ' low' : ''}" style="grid-area:${r + 1}/1">${r}</div>`;
      for (let c = 0; c < 27; c++) h += `<div class="c" style="grid-area:${r + 1}/${c + 2}"></div>`;
    }
    const col = s => s.charCodeAt(0) - 63;
    const put = (r, c, t, w, span = 1) => h += `<div class="t" style="grid-area:${r + 1}/${col(c)}/auto/span ${span}"><fit-text w="${w}">${t}</fit-text></div>`;
    const mark = (r, c, t) => h += `<div class="t ${t === '1' ? 'n' : ''}" style="grid-area:${r + 1}/${col(c)}">${t}</div>`;
    const block = (r, left, title, tw, head, hw, rel, rw, a, b, ms, last) => {
      const L = left === 'C', c2 = L ? 'G' : 'P';
      if (title) h += `<div class="title" style="grid-area:${r}/${col(L ? 'E' : 'O')}"><fit-text w="${tw}">${title}</fit-text></div>`;
      put(r, left, head, hw, last ? 8 : 7);
      put(r + 1, left, a[0], a[1]); put(r + 1, c2, b[0], b[1]);
      ms[0].forEach((m, i) => m && mark(r + 2 + i, left, m));
      ms[1].forEach((m, i) => m && mark(r + 2 + i, c2, m));
      put(r + 6, left, rel, rw, 5);
      const cls = last ? 'box open' : 'box';
      h += `<div class="${cls}" style="grid-area:${r + 1}/${col(left)}/span 7/span 7"></div>`;
      const s = L ? [0, 63, 79, 69] : [0, 55.5, 71, 61];
      h += `<svg class="arrows" style="grid-area:${r + 2}/${col(L ? 'E' : 'N')}/span 4/span 2;margin-left:${L ? 10 : 8.5}px" width="82" height="62"><g fill="#175d7d" stroke="#0b3349" stroke-width="1.600"><path d="M.8 9.500H${s[1]}V3L${s[2] - 1} 17L${s[1]} 31.500V24.500H.8Z"/><path d="M${s[3]} 40H14.500V34L1.800 47L14.500 59.500V53H${s[3]}Z"/></g></svg>`;
    };
    const st = ['Student', 35.5], ba = ['Batch', 25];
    block(3, 'C', 'M-1', 27.5, 'one stutdent can join one batch AND One batch can have many students', 320, 'Relation between Student and Batch is Many to One', 227.5, st, ba, [['1', 'M', 0, 'M'], ['1', '1', 0, '1']]);
    block(3, 'L', '1-M', 28.5, 'one stutdent can join Many batch AND One batch can have one students', 318.5, 'Relation between Student and Batch is One to Many', 226.5, st, ba, [['1', '1', 0, '1'], ['M', '1', 0, 'M']]);
    block(13, 'C', '1-1', 23.5, 'one stutdent can join one batch AND One batch can have one students', 312, 'Relation between Student and Batch is One to One', 221, st, ba, [['1', '1', 0, '1'], ['1', '1', 0, '1']]);
    block(13, 'L', 'M-M', 32.5, 'one stutdent can join Many batch AND One batch can have Many students', 325.5, 'Relation between Student and Batch is Many to Many', 232.5, st, ba, [['1', 'M', 0, 'M'], ['M', '1', 0, 'M']]);
    block(21, 'L', '', 0, 'one Employee can join Many Projects AND One Project can have Many Employees', 360.5, 'Relation between Emplyee and Project is Many to Many', 241.5, ['Employee', 46], ['Project', 31], [['1', 'M', 0, 'M'], ['M', '1', 0, 'M']], true);
    h += '<div class="cur" style="grid-area:23/10"><i></i></div>';
    this.attachShadow({ mode: 'open' }).innerHTML = `<style>:host{display:grid;width:1350px;flex:none;height:462px;overflow:hidden;grid-template-columns:${cols};grid-template-rows:${rows};font-size:9.800px;color:#2a2a2a}
      *{box-sizing:border-box}
      .c{background:#fff;border-right:1px solid #e0e0e0;border-bottom:1px solid #e0e0e0}
      .ch,.rh{font:10.500px/16px Inter,"Liberation Sans";color:#555;text-align:center;background:#efefef}
      .ch{border-bottom:1px solid #b5b5b5;border-right:1px solid #e2e2e2;padding-left:2px}.last{padding-left:16px}.on{background:#d6d6d6;color:#1e7145;border-bottom:2px solid #1e7145}
      .rh{border-right:1px solid #b5b5b5;line-height:15px;width:19px;letter-spacing:-.400px;overflow:hidden;text-align:center;padding-right:3px}.tall{padding-top:7px;line-height:16px}.low{line-height:13px}.ron{background:#d6d6d6;color:#1e7145;border-right:2px solid #1e7145}
      .corner{border-right:1px solid #b5b5b5;border-bottom:1px solid #b5b5b5;background:linear-gradient(135deg,transparent 65%,#d5d5d5 65%) 6px 2px/10px 12px no-repeat #efefef}
      .t{padding-left:2.500px;line-height:15px;height:14px;white-space:nowrap;background:#fff;margin-right:1px;position:relative;z-index:1;overflow:visible}
      .n{text-align:right;padding-right:2px}
      .title{font-size:16px;line-height:25px;padding-left:3.500px;color:#111;background:#fff;margin:0 1px 1px 0;white-space:nowrap}
      .box{border:2px solid #0a0a0a;margin:-2px 0 -1px -1px;z-index:2;position:relative}
      .open{clip-path:polygon(0 0,100% 0,100% 2px,calc(100% - 2px) 2px,calc(100% - 2px) 17px,100% 17px,100% 100%,0 100%);margin-top:-1px}
      .arrows{z-index:3;position:relative;display:block;overflow:visible}
      .cur{border:2px solid #1e7145;margin:-1px;z-index:4;position:relative}.cur i{position:absolute;right:-3px;bottom:-3px;width:5px;height:5px;background:#1e7145;border:1px solid #fff;box-sizing:content-box}
      </style>` + h;
  }
}

class SheetTabs extends HTMLElement {
  constructor() {
    super();
    this.attachShadow({ mode: 'open' }).innerHTML = `<style>:host{display:block;border-top:1px solid #ddd;height:32px;box-sizing:border-box}${LINE}
      .tab{width:59px;height:28px;background:#fff;border-radius:0 0 5px 5px;box-shadow:0 1px 2px #0003;display:flex;flex-direction:column;align-items:center;font-weight:600;font-size:13.500px;line-height:22px;margin-top:-4px;padding-top:1px}
      .tab fit-text{border-bottom:2px solid #1e7145}
      .h{display:flex;align-items:center;width:506px;height:14px;border-radius:7px;background:#f7f7f7;padding:0 2px;gap:5px}.h div{width:472px;height:10px;border-radius:5px;background:#6e6e6e}</style>` +
      line(0, [I(24, 'prev'), I(57, 'next'), H(113, 59, '<div class="tab"><fit-text w="42">Sheet1</fit-text></div>'), H(175, 1, '<i style="width:1px;height:18px;background:#ccc"></i>'), I(218, 'plus'), I(823, 'dots'), H(843, 506, '<div class="h"><ui-icon name="tl"></ui-icon><div></div><ui-icon name="tr" style="margin-left:4px"></ui-icon></div>')], 'height:30px');
  }
}

class StatusBar extends HTMLElement {
  constructor() {
    super();
    this.attachShadow({ mode: 'open' }).innerHTML = `<style>:host{display:block;background:#f6f6f6;font-size:11.500px;color:#444}${LINE}.v{width:41px;height:23px;background:#dedede;display:flex;align-items:center;justify-content:center}</style>` +
      line(0, [T(8, 32, 'Ready'), I(59, 'access'), T(77, 127.5, 'Accessibility: Investigate', 'font-weight:600'), H(1068, 41, '<div class="v"><ui-icon name="v1"></ui-icon></div>'), I(1122, 'v2'), I(1162, 'v3'), I(1195, 'minus'), I(1209, 'zoomer'), I(1314.5, 'plus2'), T(1337, 21.5, '77%')], 'height:23px');
  }
}

class TaskBar extends HTMLElement {
  constructor() {
    super();
    const app = (x, w, name, on = true, extra = '', cls = '') => H(x, w, `<div class="app ${on ? 'on' : ''} ${cls}"><ui-icon name="${name}"></ui-icon>${extra}</div>`);
    const two = (x, w, a, aw, b, bw) => H(x, w, `<div class="two"><fit-text w="${aw}">${a}</fit-text><fit-text w="${bw}">${b}</fit-text></div>`);
    this.attachShadow({ mode: 'open' }).innerHTML = `<style>:host{display:block;position:relative;background:linear-gradient(90deg,#2c2b26 336px,#1e2e2b 420px,#1d2d2b);color:#f2f2f2;width:1372px;height:41px;flex:none;border-top:1px solid #999;box-sizing:border-box}${LINE}
      .start{width:45px;height:40px;background:linear-gradient(#1a1411 60%,#33231b);display:flex;align-items:center;justify-content:center;padding-left:0}
      .s{width:291px;height:40px;background:#f2f2f2;display:flex;align-items:center;color:#484848;font-size:14.500px}
      .app{width:100%;height:40px;display:flex;align-items:center;justify-content:center;border-bottom:2px solid transparent;position:relative}.on{border-color:#76b4e6}.act{background:#52605e}
      .badge{position:absolute;left:15px;top:19px;border:1px solid #aaa;border-radius:9px;background:#303c3a;font:bold 10.500px/14px "Noto Sans";padding:0 3px}
      .two{display:flex;flex-direction:column;align-items:center;font-size:12px;line-height:17.500px;width:100%;margin-top:-1px}
      .w{position:relative;height:20px}.w b{position:absolute;left:12.500px;top:-4px;width:12px;height:12px;border-radius:50%;background:#c42b1c;font:bold 9px/12px "Noto Sans";text-align:center}
      .call{position:absolute;left:0;top:0;width:176px;height:29.500px;background:rgba(20,20,20,.54);border-radius:0 0 6px 0;color:#fff;font-size:14.500px;overflow:hidden;display:flex;align-items:center}
      .call fit-text{margin-left:-1px}</style>` +
      line(0, [H(0, 45, '<div class="start"><ui-icon name="win"></ui-icon></div>'),
      H(45, 291, '<div class="s"><ui-icon name="search" style="margin:0 14px 0 12px"></ui-icon><fit-text w="127">Type here to search</fit-text><ui-icon name="stars" style="margin-left:48px;margin-top:-2px"></ui-icon></div>'),
      app(340, 40, 'task', false), app(391, 40, 'folder'), app(441, 40, 'copilot', false), app(491, 40, 'edge'), app(540, 40, 'store', false), app(590, 40, 'outlook', false), app(639, 41, 'wps'), app(689, 40, 'teams'), app(738, 41, 'chrome'), app(788, 41, 'wa', true, '<span class="badge"><fit-text w="21">99+</fit-text></span>'), app(838, 40, 'blue'), app(883, 49, 'bigexcel', true, '', 'act'),
      H(959, 26, '<div class="w"><ui-icon name="weather"></ui-icon><b>2</b></div>'), T(992, 29, '32°C', 'font-size:14px'), I(1047, 'up'), I(1070, 'onedrive'), I(1096, 'cam'), I(1120, 'mic'), I(1142, 'batt'), I(1169, 'wifi'), I(1190, 'vol'),
      two(1217, 24, 'ENG', 23.5, 'IN', 12), two(1253, 60, '12:14', 28, '06-06-2025', 59.5), I(1330, 'notif'), H(1367, 1, '<i style="width:1px;height:40px;background:#88918f"></i>')], 'height:40px') +
      `<div class="call"><fit-text w="110">rmar (Unverified)</fit-text><svg width="60" height="29"><path d="M8 14.500H22" stroke="#777" stroke-width="1.300"/><path d="M44 6V22M36 14.500H52" stroke="#fff" stroke-width="1.400"/></svg></div>`;
  }
}

class ExcelApp extends HTMLElement {
  constructor() {
    super();
    this.attachShadow({ mode: 'open' }).innerHTML = `<style>:host{display:flex;flex-direction:column;width:1379px;height:784px;overflow:hidden;position:relative;box-sizing:border-box;border-top:1px solid #fff;background:#f5f5f5}
      .edge{height:6px;border-top:1px solid #d8d8d8;box-sizing:border-box;flex:none}
      .win{width:1372px;background:#efefef;display:flex;flex-direction:column;height:736px;flex:none}
      .win>*{flex:none}
      title-bar{height:48px}menu-tabs{height:31px}formula-bar{height:40px}status-bar{height:23px}
      .mid{display:flex;height:462px}.vs{width:22px;display:flex;flex-direction:column;align-items:center;gap:5px;padding-top:6px;box-sizing:border-box}.vs div{width:9px;height:426px;border-radius:5px;background:#6a6a6a}
      .ptr{position:absolute;left:84px;top:121px}</style>
      <div class="edge"></div>
      <div class="win"><title-bar></title-bar><menu-tabs></menu-tabs><ribbon-bar></ribbon-bar><formula-bar></formula-bar>
      <div class="mid"><sheet-grid></sheet-grid><div class="vs"><ui-icon name="tu"></ui-icon><div></div><ui-icon name="td" style="margin-top:3px"></ui-icon></div></div>
      <sheet-tabs></sheet-tabs><status-bar></status-bar></div>
      <task-bar></task-bar><ui-icon class="ptr" name="cursor"></ui-icon>`;
  }
}
[['ui-icon', UiIcon], ['fit-text', FitText], ['title-bar', TitleBar], ['menu-tabs', MenuTabs], ['ribbon-group', RibbonGroup], ['ribbon-bar', RibbonBar], ['formula-bar', FormulaBar], ['sheet-grid', SheetGrid], ['sheet-tabs', SheetTabs], ['status-bar', StatusBar], ['task-bar', TaskBar], ['excel-app', ExcelApp]].forEach(([n, c]) => customElements.define(n, c));
fitted.forEach(t => t.fit());
</script>
</body>
</html>
